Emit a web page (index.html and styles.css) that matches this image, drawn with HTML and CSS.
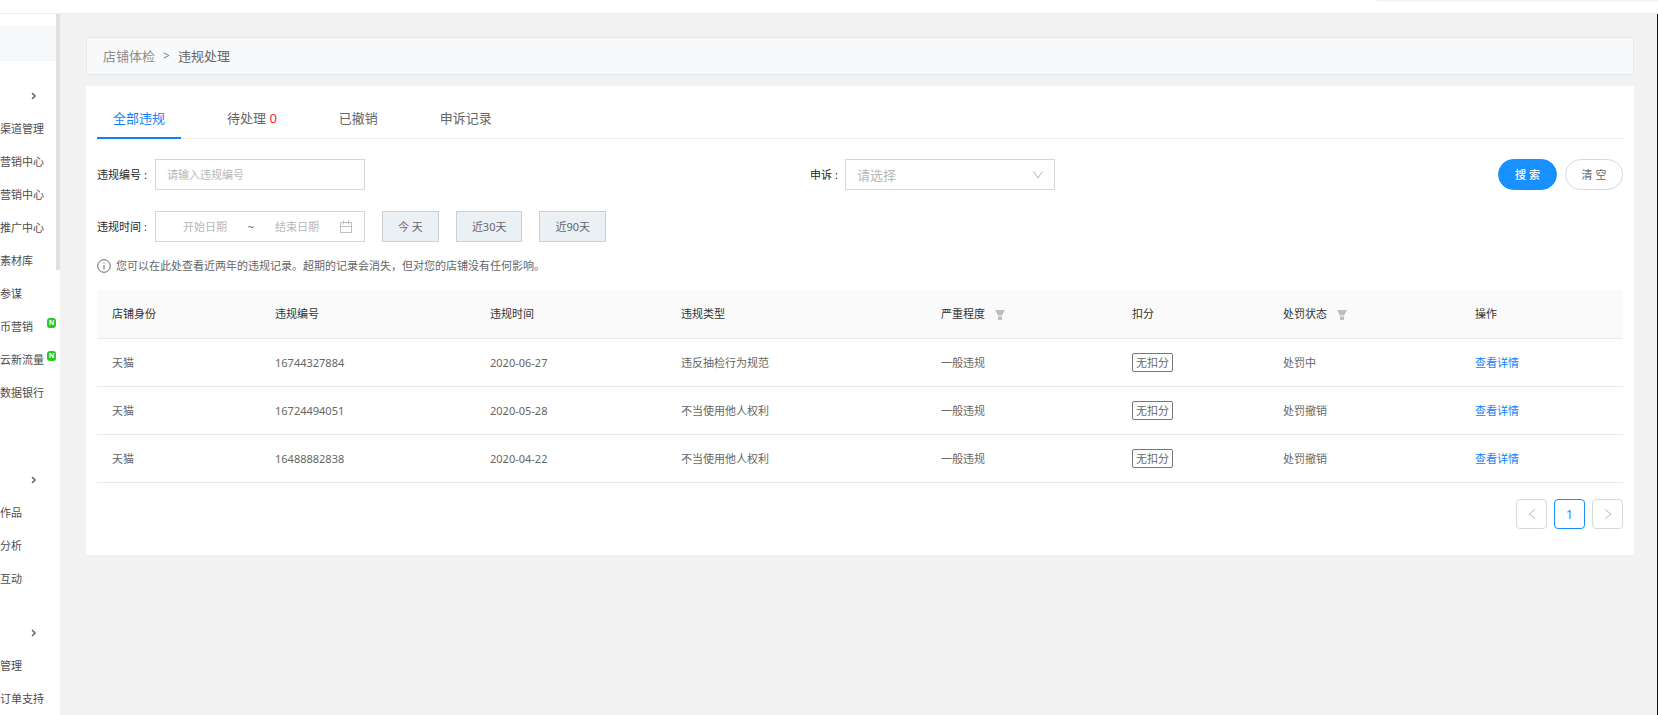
FILE: index.html
```html
<!DOCTYPE html>
<html lang="zh-CN">
<head>
<meta charset="utf-8">
<title>违规处理</title>
<link rel="stylesheet" href="styles.css">
</head>
<body>
<header class="topbar"><div class="topbar-pill"></div></header>
<div class="layout">
  <nav class="sidebar">
    <div class="side-current"></div>
    <section class="side-group">
      <button class="side-toggle" aria-label="展开"><svg width="6" height="8" viewBox="0 0 6 8"><path d="M1 1l3 3-3 3"/></svg></button>
      <a class="side-link" href="#">渠道管理</a>
      <a class="side-link" href="#">营销中心</a>
      <a class="side-link" href="#">营销中心</a>
      <a class="side-link" href="#">推广中心</a>
      <a class="side-link" href="#">素材库</a>
      <a class="side-link" href="#">参谋</a>
      <a class="side-link" href="#">币营销<span class="badge">N</span></a>
      <a class="side-link" href="#">云新流量<span class="badge">N</span></a>
      <a class="side-link" href="#">数据银行</a>
    </section>
    <section class="side-group compact">
      <button class="side-toggle" aria-label="展开"><svg width="6" height="8" viewBox="0 0 6 8"><path d="M1 1l3 3-3 3"/></svg></button>
      <a class="side-link" href="#">作品</a>
      <a class="side-link" href="#">分析</a>
      <a class="side-link" href="#">互动</a>
    </section>
    <section class="side-group compact">
      <button class="side-toggle" aria-label="展开"><svg width="6" height="8" viewBox="0 0 6 8"><path d="M1 1l3 3-3 3"/></svg></button>
      <a class="side-link" href="#">管理</a>
      <a class="side-link" href="#">订单支持</a>
    </section>
    <div class="side-scroll"></div>
  </nav>

  <main class="main">
    <div class="crumbs"><a class="crumb-link" href="#">店铺体检</a><span class="crumb-sep">&gt;</span><span>违规处理</span></div>

    <div class="card">
      <div class="tabs" role="tablist">
        <button class="tab active" role="tab" aria-selected="true">全部违规</button>
        <button class="tab" role="tab">待处理 <span class="count">0</span></button>
        <button class="tab" role="tab">已撤销</button>
        <button class="tab" role="tab">申诉记录</button>
      </div>

      <form class="filters">
        <div class="field">
          <label class="label" for="code">违规编号<span class="colon">:</span></label>
          <input class="control" id="code" type="text" placeholder="请输入违规编号">
        </div>
        <div class="field">
          <label class="label short" for="appeal">申诉<span class="colon">:</span></label>
          <div class="select-box">
            <select class="control select" id="appeal"><option>请选择</option></select>
            <svg class="select-arrow" width="10" height="8" viewBox="0 0 10 8"><path d="M.5 .5L5 7 9.500 .5"/></svg>
          </div>
          <div class="actions">
            <button class="pill primary" type="button">搜 索</button>
            <button class="pill" type="button">清 空</button>
          </div>
        </div>
        <div class="field wide">
          <label class="label" for="start">违规时间<span class="colon">:</span></label>
          <div class="control range">
            <input class="date" id="start" type="text" placeholder="开始日期">
            <span class="tilde">~</span>
            <input class="date" type="text" placeholder="结束日期" aria-label="结束日期">
            <svg class="calendar" width="14" height="14" viewBox="0 0 14 14"><path d="M1.500 2.500h11v10h-11zM1.500 6.500h11M4.500 .5v4M9.500 .5v4"/></svg>
          </div>
          <div class="quick">
            <button class="quick-btn" type="button">今 天</button>
            <button class="quick-btn" type="button">近30天</button>
            <button class="quick-btn" type="button">近90天</button>
          </div>
        </div>
      </form>

      <p class="note">
        <svg width="14" height="14" viewBox="0 0 14 14"><circle cx="7" cy="7" r="6.300"/><path d="M7 6v4.500M7 3.500v1.200"/></svg>
        您可以在此处查看近两年的违规记录。超期的记录会消失，但对您的店铺没有任何影响。
      </p>

      <table class="table">
        <colgroup>
          <col class="c-shop"><col class="c-code"><col class="c-date"><col class="c-type">
          <col class="c-level"><col class="c-score"><col class="c-state"><col class="c-shop">
        </colgroup>
        <thead>
          <tr>
            <th>店铺身份</th><th>违规编号</th><th>违规时间</th><th>违规类型</th>
            <th>严重程度<svg class="filter" width="10" height="10" viewBox="0 0 10 10"><path d="M0 0h10L7 5.500H3zM3 6.500h4V10H3z"/></svg></th>
            <th>扣分</th>
            <th>处罚状态<svg class="filter" width="10" height="10" viewBox="0 0 10 10"><path d="M0 0h10L7 5.500H3zM3 6.500h4V10H3z"/></svg></th>
            <th>操作</th>
          </tr>
        </thead>
        <tbody>
          <tr><td>天猫</td><td>16744327884</td><td>2020-06-27</td><td>违反抽检行为规范</td><td>一般违规</td><td><span class="tag">无扣分</span></td><td>处罚中</td><td><a class="detail" href="#">查看详情</a></td></tr>
          <tr><td>天猫</td><td>16724494051</td><td>2020-05-28</td><td>不当使用他人权利</td><td>一般违规</td><td><span class="tag">无扣分</span></td><td>处罚撤销</td><td><a class="detail" href="#">查看详情</a></td></tr>
          <tr><td>天猫</td><td>16488882838</td><td>2020-04-22</td><td>不当使用他人权利</td><td>一般违规</td><td><span class="tag">无扣分</span></td><td>处罚撤销</td><td><a class="detail" href="#">查看详情</a></td></tr>
        </tbody>
      </table>

      <div class="pager">
        <button class="page" aria-label="上一页"><svg width="8" height="10" viewBox="0 0 8 10"><path d="M7 .5L1 5l6 4.500"/></svg></button>
        <button class="page current">1</button>
        <button class="page" aria-label="下一页"><svg width="8" height="10" viewBox="0 0 8 10"><path d="M1 .5L7 5 1 9.500"/></svg></button>
      </div>
    </div>
  </main>
</div>
</body>
</html>
```

FILE: styles.css
```css
* { box-sizing: border-box; }

body {
  margin: 0;
  height: 100vh;
  display: flex;
  flex-direction: column;
  overflow: hidden;
  background: #fff;
  color: #666;
  font-family: "Noto Sans", "Noto Sans CJK SC", sans-serif;
  font-size: 11px;
  line-height: 16px;
}

button, input, select { margin: 0; font: inherit; color: inherit; }
button { padding: 0; border: 0; background: none; }
a { color: inherit; text-decoration: none; }
svg { fill: none; stroke: currentColor; flex: none; }

.topbar { flex: none; height: 14px; border-bottom: 1px solid #ededed; }
.topbar-pill {
  width: 17%;
  height: 2px;
  margin-left: auto;
  background: #f5f5f5;
  border-bottom-left-radius: 8px;
}

.layout { flex: 1; display: flex; min-height: 0; }

/* Sidebar */
.sidebar { position: relative; flex: none; width: 60px; padding-top: 12px; overflow: hidden; }
.side-current { height: 35px; margin-right: 4px; margin-bottom: 18px; background: #f7f8fa; }
.side-group { display: flex; flex-direction: column; margin-bottom: 54px; }
.side-group.compact { margin-bottom: 21px; }
.side-toggle { display: flex; align-items: center; height: 33px; padding-left: 31px; color: #666; }
.side-toggle svg { stroke-width: 1.5; }
.side-link { position: relative; height: 33px; line-height: 33px; white-space: nowrap; color: #4d4d4d; }
.badge {
  position: absolute;
  top: 8px;
  right: 4px;
  width: 9px;
  height: 10px;
  border-radius: 3px;
  background: #27c927;
  color: #fff;
  font-size: 7px;
  font-weight: 700;
  line-height: 10px;
  text-align: center;
}
.side-scroll { position: absolute; top: 0; right: 0; width: 4px; height: 256px; background: #e0e0e0; }

/* Main */
.main {
  flex: 1;
  min-width: 0;
  padding: 23px 23px 0 26px;
  background: #f2f2f2;
  border-right: 1px solid #111;
}
.crumbs {
  display: flex;
  align-items: center;
  gap: 8px;
  height: 38px;
  margin-bottom: 11px;
  padding: 0 16px;
  border: 1px solid #e6e9eb;
  background: #f7f9fb;
  font-size: 13px;
}
.crumb-link { color: #8c8c8c; }
.crumb-sep { color: #808080; font-size: 12px; }

.card { padding: 10px 11px 26px; background: #fff; }

.tabs { display: flex; gap: 30px; height: 43px; box-shadow: inset 0 -1px #ececec; }
.tab { padding: 12px 16px 9px; border-bottom: 2px solid transparent; font-size: 13px; line-height: 20px; }
.tab.active { color: #1181fb; border-bottom-color: #1181fb; }
.count { color: #f5222d; }

/* Filters */
.filters { display: grid; grid-template-columns: 713fr 813fr; gap: 21px 0; padding: 20px 0 16px; }
.field { display: flex; align-items: center; }
.field.wide { grid-column: 1 / -1; }
.label { flex: none; width: 58px; color: #262626; }
.label.short { width: 35px; }
.colon { margin-left: 3px; }
.control {
  width: 210px;
  height: 31px;
  padding: 0 11px;
  border: 1px solid #d6d6d6;
  border-radius: 0;
  background: #fff;
  outline: 0;
}
::placeholder { color: #b8b8b8; opacity: 1; }
.select-box { position: relative; }
.select { appearance: none; color: #b8b8b8; font-size: 13px; }
.select-arrow { position: absolute; right: 12px; top: 12px; color: #b4b4b4; pointer-events: none; }
.actions { display: flex; gap: 8px; margin-left: auto; }
.pill { width: 58px; height: 31px; border: 1px solid #d9d9d9; border-radius: 16px; background: #fff; }
.pill.primary { width: 59px; border-color: #1890ff; background: #1890ff; color: #fff; font-weight: 500; }
.range { display: flex; align-items: center; }
.date { width: 76px; padding: 0; border: 0; outline: 0; text-align: center; background: none; }
.tilde { width: 16px; text-align: center; }
.calendar { margin-left: auto; color: #bfbfbf; }
.quick { display: flex; gap: 17px; margin-left: 17px; }
.quick-btn { height: 31px; padding: 0 15px; border: 1px solid #ccd0d3; background: #ebf0f5; }

.note { display: flex; align-items: center; gap: 5px; margin: 0 0 16px; }

/* Table */
.table { width: 100%; table-layout: fixed; border-collapse: separate; border-spacing: 0; }
.c-shop { width: 163px; }
.c-code { width: 215px; }
.c-date { width: 191px; }
.c-type { width: 260px; }
.c-level { width: 191px; }
.c-score { width: 151px; }
.c-state { width: 192px; }
.table th, .table td { height: 48px; padding: 0 15px; border-bottom: 1px solid #e8e8e8; text-align: left; }
.table th { height: 49px; background: #fafafa; color: #333; font-weight: 400; }
.filter { margin-left: 10px; vertical-align: -2px; fill: #bfbfbf; stroke: none; }
.tag { display: inline-block; padding: 0 3px; border: 1px solid #777; border-radius: 2px; line-height: 17px; }
.detail { color: #1181fb; }

/* Pagination */
.pager { display: flex; justify-content: flex-end; gap: 7px; margin-top: 16px; }
.page {
  display: flex;
  align-items: center;
  justify-content: center;
  width: 31px;
  height: 30px;
  border: 1px solid #d9d9d9;
  border-radius: 4px;
  color: #b8b8b8;
  font-size: 13px;
}
.page.current { border-color: #1890ff; color: #1890ff; }
```
